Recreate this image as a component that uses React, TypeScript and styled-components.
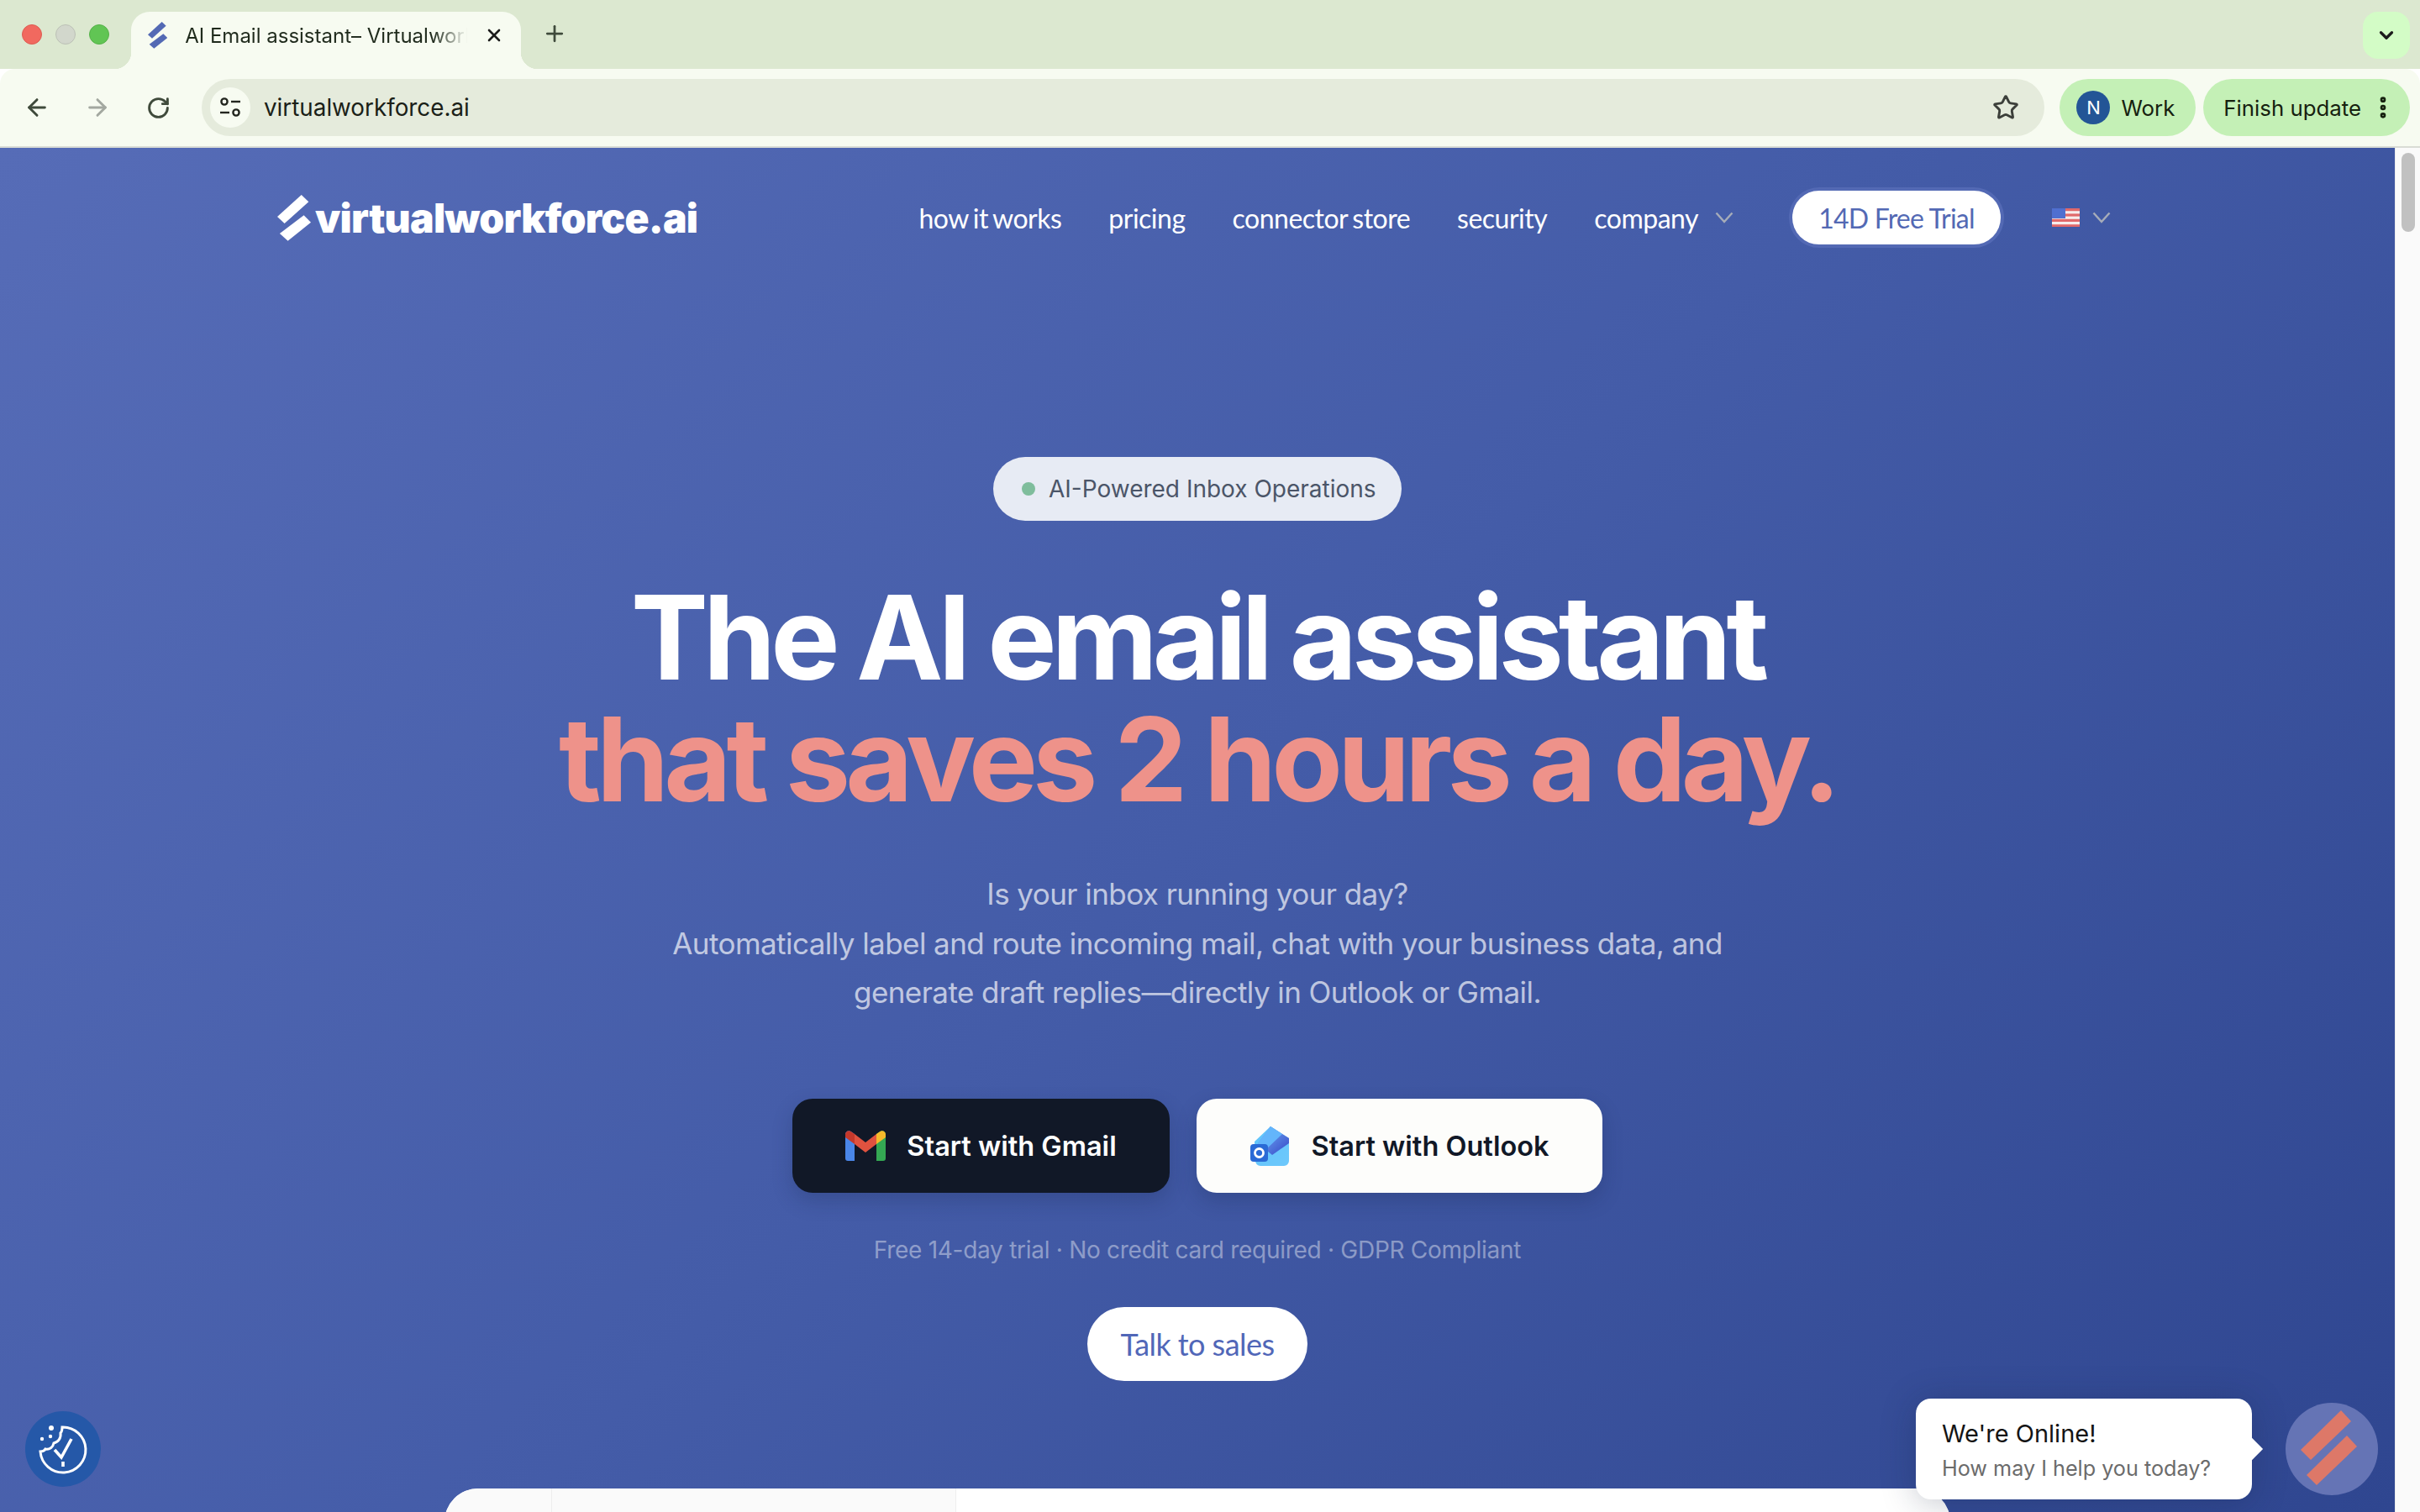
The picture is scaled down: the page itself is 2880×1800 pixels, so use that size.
import React from "react";
import styled, { createGlobalStyle } from "styled-components";
import {
  ArrowLeft,
  ArrowRight,
  ChevronDown,
  EllipsisVertical,
  Plus,
  RotateCw,
  Star,
  X,
} from "lucide-react";

const GlobalStyle = createGlobalStyle`
  html, body {
    margin: 0;
    padding: 0;
    height: 100%;
    overflow: hidden;
    background: #fff;
    font-family: "Inter", "Liberation Sans", sans-serif;
  }
  * { box-sizing: border-box; }
`;

const Window = styled.div`
  width: 2880px;
  height: 1800px;
  display: flex;
  flex-direction: column;
  overflow: hidden;
  position: relative;
`;

const TabStrip = styled.div`
  height: 82px;
  flex: none;
  background: #dce8d0;
  display: flex;
  align-items: flex-start;
  padding: 14px 12px 0 26px;
`;

const Lights = styled.div`
  display: flex;
  gap: 16px;
  margin-top: 15px;
  margin-right: 26px;
`;

const Light = styled.span<{ $color: string; $edge: string }>`
  width: 24px;
  height: 24px;
  border-radius: 50%;
  background: ${(p) => p.$color};
  border: 1px solid ${(p) => p.$edge};
`;

const Tab = styled.div`
  position: relative;
  width: 464px;
  height: 68px;
  background: #f7fbf1;
  border-radius: 22px 22px 0 0;
  display: flex;
  align-items: center;
  padding: 0 20px 12px 20px;
  color: #1f2a1c;

  &::before,
  &::after {
    content: "";
    position: absolute;
    bottom: 0;
    width: 20px;
    height: 20px;
  }
  &::before {
    left: -20px;
    background: radial-gradient(circle at 0 0, transparent 20px, #f7fbf1 20.5px);
  }
  &::after {
    right: -20px;
    background: radial-gradient(circle at 100% 0, transparent 20px, #f7fbf1 20.5px);
  }
`;

const TabTitle = styled.span`
  margin-left: 21px;
  width: 337px;
  font-size: 24px;
  white-space: nowrap;
  overflow: hidden;
  -webkit-mask-image: linear-gradient(90deg, #000 88%, transparent);
  mask-image: linear-gradient(90deg, #000 88%, transparent);
`;

const TabClose = styled.span`
  display: flex;
  margin-left: 20px;
  color: #1c1c1c;
`;

const NewTab = styled.span`
  display: flex;
  margin: 11px 0 0 25px;
  color: #3f4a3b;
`;

const StripSpacer = styled.div`
  flex: 1;
`;

const ExpandTabs = styled.div`
  width: 56px;
  height: 56px;
  border-radius: 18px;
  background: #d3fcc6;
  display: flex;
  align-items: center;
  justify-content: center;
  color: #1c1c1c;
`;

const Toolbar = styled.div`
  height: 94px;
  flex: none;
  background: #f7fbf1;
  border-bottom: 2px solid #d9dcd5;
  border-radius: 18px 18px 0 0;
  display: flex;
  align-items: flex-start;
  padding: 12px 12px 0 0;
  position: relative;
`;

const NavIcon = styled.span<{ $faded?: boolean }>`
  width: 72px;
  height: 68px;
  display: flex;
  align-items: center;
  justify-content: center;
  color: ${(p) => (p.$faded ? "#a3a8a0" : "#3f4a3b")};
`;

const NavIcons = styled.div`
  display: flex;
  width: 240px;
  padding-left: 8px;
`;

const Omnibox = styled.div`
  flex: 1;
  height: 68px;
  border-radius: 34px;
  background: #e5ebdc;
  display: flex;
  align-items: center;
  padding: 0 30px 0 10px;
`;

const TuneBadge = styled.span`
  width: 48px;
  height: 48px;
  border-radius: 50%;
  background: #f7fbf1;
  display: flex;
  align-items: center;
  justify-content: center;
`;

const UrlText = styled.span`
  margin-left: 16px;
  font-size: 27.8px;
  color: #1b1f18;
  flex: 1;
`;

const Chip = styled.div<{ $left: number; $pad: string }>`
  height: 68px;
  border-radius: 34px;
  background: #c4f0b6;
  margin-left: ${(p) => p.$left}px;
  display: flex;
  align-items: center;
  padding: ${(p) => p.$pad};
  font-size: 25.8px;
  color: #16210f;
`;

const Avatar = styled.span`
  width: 40px;
  height: 40px;
  border-radius: 50%;
  background: #235596;
  color: #fff;
  font-size: 22px;
  display: flex;
  align-items: center;
  justify-content: center;
  margin-right: 13px;
`;

const MoreIcon = styled.span`
  display: flex;
  margin-left: 10px;
`;

const Viewport = styled.div`
  flex: 1;
  display: flex;
  min-height: 0;
`;

const Page = styled.main`
  flex: 1;
  min-width: 0;
  background: linear-gradient(135deg, #566cb7 0%, #445ca8 50%, #2f4690 100%);
  display: flex;
  flex-direction: column;
  align-items: center;
  overflow: hidden;
`;

const Scrollbar = styled.div`
  width: 30px;
  flex: none;
  background: #fafafa;
  border-left: 1px solid #ececec;
  padding: 6px 6px 0 7px;
`;

const ScrollThumb = styled.div`
  height: 94px;
  border-radius: 8px;
  background: #c1c1c1;
`;

const Header = styled.header`
  width: 2190px;
  height: 140px;
  flex: none;
  padding-top: 26px;
  display: flex;
  align-items: center;
  justify-content: space-between;
`;

const Logo = styled.div`
  display: flex;
  align-items: center;
  gap: 5px;
  color: #fff;
  font-size: 48px;
  font-weight: 900;
  letter-spacing: -0.75px;
`;

const NavBar = styled.nav`
  display: flex;
  align-items: center;
  margin-right: 8px;
  font-family: "Lato", sans-serif;
  font-size: 32px;
  color: #fff;
`;

const NavLink = styled.a`
  margin-left: 56px;
  white-space: nowrap;
  letter-spacing: -0.5px;
  word-spacing: -2px;
`;

const Caret = styled.svg<{ $left: number }>`
  margin-left: ${(p) => p.$left}px;
  flex: none;
`;

const TrialButton = styled.a`
  margin-left: 66px;
  width: 256px;
  height: 72px;
  border-radius: 36px;
  background: #fff;
  border: 4px solid #5369b4;
  color: #5369b4;
  display: flex;
  align-items: center;
  justify-content: center;
  white-space: nowrap;
  font-size: 32px;
  letter-spacing: -0.8px;
`;

const Flag = styled.svg`
  margin-left: 57px;
`;

const Hero = styled.section`
  flex: 1;
  display: flex;
  flex-direction: column;
  align-items: center;
  width: 100%;
  min-height: 0;

  & > * {
    flex: none;
  }
`;

const Badge = styled.div`
  margin-top: 228px;
  height: 76px;
  width: 486px;
  border-radius: 38px;
  background: #e7ebf4;
  color: #4b5568;
  font-size: 28px;
  display: flex;
  align-items: center;
  padding-left: 34px;
  white-space: nowrap;
`;

const BadgeDot = styled.span`
  width: 16px;
  height: 16px;
  border-radius: 50%;
  background: #7fbd9c;
  margin-right: 16px;
`;

const Headline = styled.h1`
  margin: 66px 0 0;
  font-size: 138.3px;
  line-height: 145px;
  font-weight: 700;
  letter-spacing: -6px;
  word-spacing: -1px;
  color: #fff;
  text-align: center;
`;

const Accent = styled.span`
  display: block;
  color: #ee928a;
`;

const Lead = styled.p`
  margin: 59px 0 0;
  font-size: 35px;
  line-height: 58.7px;
  letter-spacing: -0.56px;
  color: rgba(255, 255, 255, 0.68);
  text-align: center;
`;

const Actions = styled.div`
  margin-top: 97px;
  display: flex;
  gap: 32px;
`;

const StartButton = styled.a<{ $dark?: boolean; $width: number }>`
  width: ${(p) => p.$width}px;
  height: 112px;
  border-radius: 24px;
  background: ${(p) => (p.$dark ? "#111827" : "#fdfdfb")};
  color: ${(p) => (p.$dark ? "#fff" : "#111827")};
  box-shadow: 0 10px 24px rgba(20, 30, 70, 0.22);
  display: flex;
  align-items: center;
  justify-content: center;
  gap: 25px;
  font-size: 32.5px;
  font-weight: 600;
  white-space: nowrap;
`;

const Fineprint = styled.div`
  margin-top: 52px;
  font-size: 28px;
  line-height: 32px;
  letter-spacing: -0.28px;
  color: rgba(255, 255, 255, 0.42);
`;

const SalesButton = styled.a`
  margin-top: 52px;
  width: 262px;
  height: 88px;
  border-radius: 44px;
  background: #fff;
  color: #5167b8;
  font-family: "Lato", sans-serif;
  font-size: 36px;
  letter-spacing: -0.55px;
  display: flex;
  align-items: center;
  justify-content: center;
  white-space: nowrap;
`;

const DemoPanel = styled.div`
  margin-top: 128px;
  width: 1792px;
  height: 200px;
  border-radius: 40px 40px 0 0;
  background: #fff;
  display: grid;
  grid-template-columns: 128px 481px 1fr;
  overflow: hidden;
`;

const PanelCell = styled.div<{ $white?: boolean }>`
  background: ${(p) => (p.$white ? "#fff" : "#fafafa")};
  border-right: ${(p) => (p.$white ? "none" : "1px solid #eeeeee")};
`;

const CookieButton = styled.div`
  position: absolute;
  left: 30px;
  top: 1680px;
  width: 90px;
  height: 90px;
  border-radius: 50%;
  background: #2558a8;
  display: flex;
  align-items: center;
  justify-content: center;
`;

const ChatBubble = styled.div`
  position: absolute;
  left: 2280px;
  top: 1665px;
  width: 400px;
  height: 120px;
  border-radius: 18px;
  background: #fff;
  box-shadow: 0 4px 40px rgba(20, 30, 60, 0.25);
  padding: 24px 0 0 31px;

  &::after {
    content: "";
    position: absolute;
    right: -9px;
    top: 50px;
    width: 20px;
    height: 20px;
    background: #fff;
    transform: rotate(45deg);
  }
`;

const ChatTitle = styled.div`
  font-size: 29px;
  line-height: 36px;
  color: #141414;
`;

const ChatSub = styled.div`
  margin-top: 7px;
  font-size: 25.2px;
  line-height: 32px;
  color: #6b6b6b;
`;

const ChatLauncher = styled.div`
  position: absolute;
  left: 2720px;
  top: 1670px;
  width: 110px;
  height: 110px;
  border-radius: 50%;
  background: #6574b5;
`;

function SlashMark({ size, color }: { size: number; color: string }) {
  return (
    <svg width={(size * 40) / 55} height={size} viewBox="0 0 40 55" fill={color}>
      <polygon points="28.7,0 37.3,8.3 8.6,34 0,26" />
      <polygon points="31.6,24.3 40,32.7 12.6,54.8 2.9,46" />
    </svg>
  );
}

function NavCaret({ left }: { left: number }) {
  return (
    <Caret $left={left} width="22" height="14" viewBox="0 0 22 14" fill="none" stroke="#a6acb9" strokeWidth="2.4">
      <path d="M1.500 1.500L11 12l9.500-10.500" />
    </Caret>
  );
}

function TuneIcon() {
  return (
    <svg width="26" height="26" viewBox="0 0 26 26" fill="none" stroke="#23261f" strokeWidth="2.4">
      <circle cx="6" cy="6" r="3.6" />
      <path d="M14 6h11" />
      <path d="M1 19h11" />
      <circle cx="20" cy="19" r="3.6" />
    </svg>
  );
}

function GmailIcon() {
  return (
    <svg width="48" height="36" viewBox="0 0 48 36">
      <path d="M0 4.500C0 1 4-1 7 1.200L11 4v32H3a3 3 0 0 1-3-3z" fill="#4a86e8" />
      <path d="M37 4l4-2.800C44-1 48 1 48 4.500V33a3 3 0 0 1-3 3h-8z" fill="#34a853" />
      <path d="M0 4.500C0 1 4-1 7 1.200L11 4v12L0 8z" fill="#c5382b" />
      <path d="M11 4l13 10L37 4v12L24 26 11 16z" fill="#e0523f" />
      <path d="M37 4l4-2.800C44-1 48 1 48 4.500V8L37 16z" fill="#f6b92b" />
    </svg>
  );
}

function OutlookIcon() {
  return (
    <svg width="48" height="47" viewBox="0 0 48 47">
      <defs>
        <linearGradient id="olBody" x1="0" y1="0" x2="1" y2="1">
          <stop offset="0" stopColor="#5fc4fb" />
          <stop offset="1" stopColor="#6ec8fb" />
        </linearGradient>
        <linearGradient id="olTop" x1="0" y1="0" x2="1" y2="1">
          <stop offset="0" stopColor="#7ab8fb" />
          <stop offset="1" stopColor="#3140c4" />
        </linearGradient>
      </defs>
      <path d="M5 18L24 0l22 14v27a6 6 0 0 1-6 6H12a6 6 0 0 1-6-6z" fill="url(#olBody)" />
      <path d="M24 0l22 14v6L26 34 9 20z" fill="url(#olTop)" opacity="0.95" />
      <path d="M24 0l14 9-20 19-9-8z" fill="#63b5fb" />
      <rect x="0" y="21" width="21" height="21" rx="4" fill="#2a6ad6" />
      <circle cx="10.500" cy="31.500" r="5" fill="none" stroke="#fff" strokeWidth="2.800" />
    </svg>
  );
}

function UsFlag() {
  const stripes = [0, 2, 4, 6].map((row) => (
    <rect key={row} x="0" y={row * 3.2} width="33" height="3.2" fill="#e0686a" />
  ));
  return (
    <Flag width="33" height="22" viewBox="0 0 33 22">
      <rect width="33" height="22" fill="#f6ecec" />
      {stripes}
      <rect width="16" height="12" fill="#4f6fd0" />
    </Flag>
  );
}

function CookieIcon() {
  return (
    <svg width="62" height="62" viewBox="0 0 62 62" fill="none" stroke="#fff" strokeWidth="3">
      <path d="M30 5a27 27 0 1 1-26 29c3 0 5-1 6-3 5 1 9-2 10-7 5-1 9-6 8-12 2-2 2-5 2-7z" />
      <path d="M21 32l8 9 12-22" strokeWidth="3.600" />
      <path d="M31 46v6" strokeWidth="3.600" />
      <g fill="#fff" stroke="none">
        <circle cx="17" cy="6" r="3" />
        <circle cx="16" cy="16" r="2.200" />
        <circle cx="6" cy="19" r="2.200" />
      </g>
    </svg>
  );
}

function ChatMark() {
  return (
    <svg width="110" height="110" viewBox="0 0 110 110" fill="#dd7868">
      <polygon points="66,9 78,22 30,68 18,56" />
      <polygon points="73,39 85,52 37,98 25,86" />
    </svg>
  );
}

export default function App() {
  return (
    <>
      <GlobalStyle />
      <Window>
        <TabStrip>
          <Lights>
            <Light $color="#f1695f" $edge="#dd5c52" />
            <Light $color="#d2d7cc" $edge="#bcc1b6" />
            <Light $color="#61c554" $edge="#55b149" />
          </Lights>
          <Tab>
            <SlashMark size={32} color="#5369b4" />
            <TabTitle>AI Email assistant– Virtualworkforce</TabTitle>
            <TabClose>
              <X size={24} strokeWidth={2.6} />
            </TabClose>
          </Tab>
          <NewTab>
            <Plus size={30} strokeWidth={2.2} />
          </NewTab>
          <StripSpacer />
          <ExpandTabs>
            <ChevronDown size={26} strokeWidth={3} />
          </ExpandTabs>
        </TabStrip>

        <Toolbar>
          <NavIcons>
            <NavIcon>
              <ArrowLeft size={32} strokeWidth={2.2} />
            </NavIcon>
            <NavIcon $faded>
              <ArrowRight size={32} strokeWidth={2.2} />
            </NavIcon>
            <NavIcon>
              <RotateCw size={29} strokeWidth={2.4} />
            </NavIcon>
          </NavIcons>
          <Omnibox>
            <TuneBadge>
              <TuneIcon />
            </TuneBadge>
            <UrlText>virtualworkforce.ai</UrlText>
            <Star size={32} strokeWidth={2.2} color="#3c3f3a" />
          </Omnibox>
          <Chip $left={18} $pad="0 25px 0 20px">
            <Avatar>N</Avatar>
            Work
          </Chip>
          <Chip $left={9} $pad="0 16px 0 24px">
            Finish update
            <MoreIcon>
              <EllipsisVertical size={32} strokeWidth={3} />
            </MoreIcon>
          </Chip>
        </Toolbar>

        <Viewport>
          <Page>
            <Header>
              <Logo>
                <SlashMark size={55} color="#fff" />
                virtualworkforce.ai
              </Logo>
              <NavBar>
                <NavLink>how it works</NavLink>
                <NavLink>pricing</NavLink>
                <NavLink>connector store</NavLink>
                <NavLink>security</NavLink>
                <NavLink>company</NavLink>
                <NavCaret left={20} />
                <TrialButton>14D Free Trial</TrialButton>
                <UsFlag />
                <NavCaret left={15} />
              </NavBar>
            </Header>

            <Hero>
              <Badge>
                <BadgeDot />
                AI-Powered Inbox Operations
              </Badge>
              <Headline>
                The AI email assistant
                <Accent>that saves 2 hours a day.</Accent>
              </Headline>
              <Lead>
                Is your inbox running your day?
                <br />
                Automatically label and route incoming mail, chat with your business data, and
                <br />
                generate draft replies—directly in Outlook or Gmail.
              </Lead>
              <Actions>
                <StartButton $dark $width={449}>
                  <GmailIcon />
                  Start with Gmail
                </StartButton>
                <StartButton $width={483}>
                  <OutlookIcon />
                  Start with Outlook
                </StartButton>
              </Actions>
              <Fineprint>Free 14-day trial · No credit card required · GDPR Compliant</Fineprint>
              <SalesButton>Talk to sales</SalesButton>
              <DemoPanel>
                <PanelCell />
                <PanelCell />
                <PanelCell $white />
              </DemoPanel>
            </Hero>
          </Page>
          <Scrollbar>
            <ScrollThumb />
          </Scrollbar>
        </Viewport>

        <CookieButton>
          <CookieIcon />
        </CookieButton>
        <ChatBubble>
          <ChatTitle>We're Online!</ChatTitle>
          <ChatSub>How may I help you today?</ChatSub>
        </ChatBubble>
        <ChatLauncher>
          <ChatMark />
        </ChatLauncher>
      </Window>
    </>
  );
}
